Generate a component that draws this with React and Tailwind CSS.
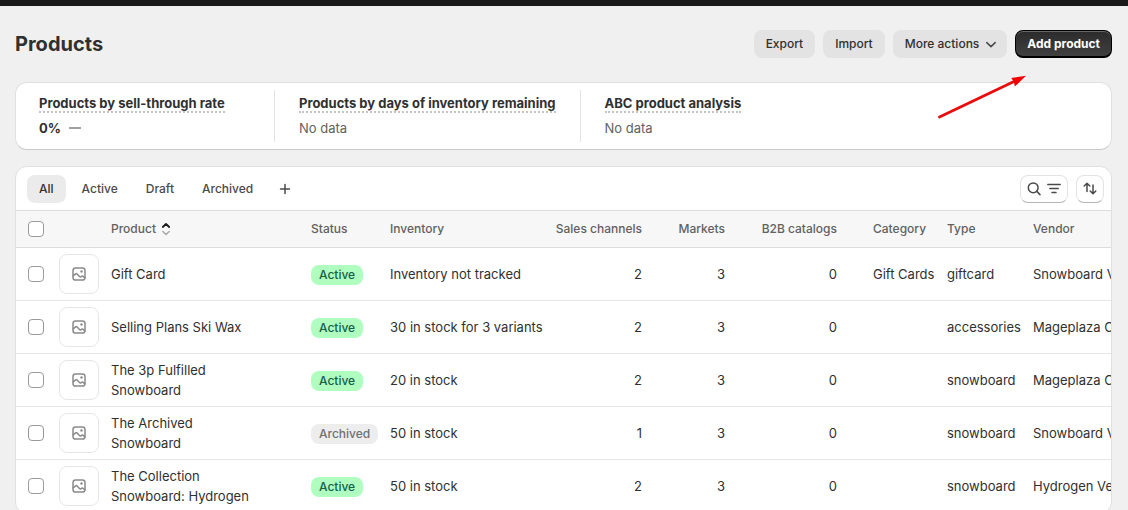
import { useState } from 'react';
import clsx from 'clsx';

const metrics = [
  { title: 'Products by sell-through rate', value: '0%' },
  { title: 'Products by days of inventory remaining' },
  { title: 'ABC product analysis' }
];

const tabs = ['All', 'Active', 'Draft', 'Archived'];

const products = [
  { name: 'Gift Card', status: 'Active', inventory: 'Inventory not tracked', channels: 2, markets: 3, catalogs: 0, category: 'Gift Cards', type: 'giftcard', vendor: 'Snowboard Vendor' },
  { name: 'Selling Plans Ski Wax', status: 'Active', inventory: '30 in stock for 3 variants', channels: 2, markets: 3, catalogs: 0, category: '', type: 'accessories', vendor: 'Mageplaza Com' },
  { name: 'The 3p Fulfilled Snowboard', status: 'Active', inventory: '20 in stock', channels: 2, markets: 3, catalogs: 0, category: '', type: 'snowboard', vendor: 'Mageplaza Com' },
  { name: 'The Archived Snowboard', status: 'Archived', inventory: '50 in stock', channels: 1, markets: 3, catalogs: 0, category: '', type: 'snowboard', vendor: 'Snowboard Vendor' },
  { name: 'The Collection Snowboard: Hydrogen', status: 'Active', inventory: '50 in stock', channels: 2, markets: 3, catalogs: 0, category: '', type: 'snowboard', vendor: 'Hydrogen Vendor' }
];

const secondaryButton = 'flex h-7 items-center rounded-lg bg-[#e3e3e3] px-3 text-[#303030] hover:bg-[#d8d8d8]';
const iconButton = 'flex h-7 items-center justify-center rounded-lg border border-[#e3e3e3] border-b-[#b5b5b5] bg-white text-[#4a4a4a]';

function Icon({ className, children }) {
  return (
    <svg viewBox="0 0 20 20" fill="none" stroke="currentColor" strokeWidth="1.5" strokeLinecap="round" strokeLinejoin="round" className={clsx('h-5 w-5 shrink-0', className)} aria-hidden="true">
      {children}
    </svg>
  );
}

function Checkbox({ label, checked, onChange }) {
  return (
    <input
      type="checkbox"
      aria-label={label}
      checked={checked}
      onChange={onChange}
      className="block h-4 w-4 appearance-none rounded border border-[#9a9a9a] bg-white checked:bg-[#303030]"
    />
  );
}

function Badge({ status }) {
  return (
    <span className={clsx('block h-5 w-fit rounded-lg px-2 text-xs font-[550] leading-5', status === 'Active' ? 'bg-[#affebf] text-[#14604a]' : 'bg-[#ededed] text-[#707070]')}>
      {status}
    </span>
  );
}

function PageHeader() {
  return (
    <header className="flex items-center justify-between">
      <h1 className="text-xl font-[650] leading-7">Products</h1>
      <div className="flex items-center gap-2 text-xs font-[550]">
        <button type="button" className={secondaryButton}>Export</button>
        <button type="button" className={secondaryButton}>Import</button>
        <button type="button" className={clsx(secondaryButton, 'gap-1')}>
          More actions
          <svg viewBox="0 0 16 16" fill="none" stroke="#4a4a4a" strokeWidth="1.5" strokeLinecap="round" strokeLinejoin="round" className="-mr-1 h-4 w-4" aria-hidden="true">
            <path d="M3.800 6.600 8 10.600l4.200-4" />
          </svg>
        </button>
        <div className="relative">
          <button type="button" className="h-7 rounded-lg border border-black border-b-2 bg-gradient-to-b from-[#2b2b2b] to-[#404040] px-[11px] font-[650] text-white shadow-[inset_0_1px_0_#666]">
            Add product
          </button>
          <svg viewBox="0 0 88 44" className="pointer-events-none absolute right-[86px] top-[45px] z-10 h-11 w-[88px]" aria-hidden="true">
            <path d="M1.500 42 76 6.500" stroke="#e80c0c" strokeWidth="2.800" strokeLinecap="round" />
            <path d="M88 0.800 73.200 3 75.800 6.600 76.800 11.600Z" fill="#f50000" />
          </svg>
        </div>
      </div>
    </header>
  );
}

function Metrics() {
  return (
    <section className="mt-6 flex rounded-xl border border-[#e0e0e0] border-b-[#c9c9c9] bg-white py-[7px]">
      {metrics.map(metric => (
        <div key={metric.title} className="min-w-[259px] border-r border-[#e3e3e3] px-6 pb-1 pt-[3px] last:border-r-0 first:pl-[23px]">
          <h2 className="relative w-fit font-[650] leading-5">
            {metric.title}
            <span className="absolute inset-x-0 bottom-0 border-b-2 border-dotted border-[#c4c4c4]" />
          </h2>
          <p className="mt-[5px] flex h-5 items-center leading-5">
            {metric.value ? (
              <>
                <span className="font-[650]">{metric.value}</span>
                <span className="ml-2 h-[2px] w-3 bg-[#a0a0a0]" />
              </>
            ) : (
              <span className="text-[#616161]">No data</span>
            )}
          </p>
        </div>
      ))}
    </section>
  );
}

function Toolbar({ active, onSelect }) {
  return (
    <div className="flex items-center justify-between border-b border-[#dcdcdc] pb-[7px] pl-[11px] pr-[7px] pt-2">
      <div className="flex items-center gap-1 text-xs font-[550] text-[#4a4a4a]">
        {tabs.map(tab => (
          <button
            key={tab}
            type="button"
            onClick={() => onSelect(tab)}
            className={clsx('h-7 rounded-lg px-3', tab === active ? 'bg-[#ebebeb] text-[#303030]' : 'hover:bg-[#f5f5f5]')}
          >
            {tab}
          </button>
        ))}
        <button type="button" aria-label="Create new view" className="flex h-7 w-9 items-center justify-center">
          <Icon className="-ml-1"><path d="M10 5.500v9M5.500 10h9" /></Icon>
        </button>
      </div>
      <div className="flex items-center gap-2">
        <button type="button" aria-label="Search and filter" className={clsx(iconButton, 'w-12')}>
          <Icon>
            <circle cx="9.200" cy="8.800" r="4.900" />
            <path d="m12.800 12.400 3.200 3.200" />
          </Icon>
          <Icon><path d="M3.800 5.500h12.400M5.800 9.500h8.400M8 13.500h4" /></Icon>
        </button>
        <button type="button" aria-label="Sort" className={clsx(iconButton, 'w-7')}>
          <Icon>
            <path d="M7 12.500V4.300M4.200 7 7 4.200l2.800 2.800M13 6v8.700M10.200 12l2.800 2.800 2.800-2.800" />
          </Icon>
        </button>
      </div>
    </div>
  );
}

function ProductTable() {
  const [selected, setSelected] = useState([]);

  const toggle = (name) => {
    setSelected(selected.includes(name) ? selected.filter(n => n !== name) : [...selected, name]);
  };

  const toggleAll = () => {
    setSelected(selected.length === products.length ? [] : products.map(p => p.name));
  };

  return (
    <table className="w-full min-w-[1184px] table-fixed border-collapse text-left">
      <colgroup>
        <col className="w-[37px]" />
        <col className="w-[52px]" />
        <col className="w-[200px]" />
        <col className="w-[79px]" />
        <col className="w-[160px]" />
        <col className="w-[104px]" />
        <col className="w-[83px]" />
        <col className="w-[112px]" />
        <col className="w-[98px]" />
        <col className="w-[86px]" />
        <col />
      </colgroup>
      <thead>
        <tr className="h-[37px] bg-[#f7f7f7] text-xs text-[#616161] shadow-[inset_0_-1px_0_#dcdcdc] *:px-1.5 *:pb-0.5 *:font-[550]">
          <td className="pl-3!">
            <Checkbox label="Select all products" checked={selected.length === products.length} onChange={toggleAll} />
          </td>
          <td />
          <th scope="col">
            <button type="button" className="flex items-center gap-1">
              Product
              <svg viewBox="0 0 10 14" fill="none" strokeWidth="1.800" strokeLinecap="round" strokeLinejoin="round" className="ml-px h-3.5 w-2.5" aria-hidden="true">
                <path d="M1.800 5 5 2l3.200 3" stroke="#1a1a1a" />
                <path d="M1.800 9.500 5 12.500l3.200-3" stroke="#a8a8a8" strokeWidth="1.500" />
              </svg>
            </button>
          </th>
          <th scope="col">Status</th>
          <th scope="col">Inventory</th>
          <th scope="col" className="text-right">Sales channels</th>
          <th scope="col" className="text-right">Markets</th>
          <th scope="col" className="text-right">B2B catalogs</th>
          <th scope="col" className="pl-[30px]!">Category</th>
          <th scope="col">Type</th>
          <th scope="col">Vendor</th>
        </tr>
      </thead>
      <tbody>
        {products.map(product => (
          <tr key={product.name} className="h-[53px] shadow-[inset_0_-1px_0_#e6e6e6] *:whitespace-nowrap *:px-1.5 *:pb-0.5 *:leading-5">
            <td className="pl-3!">
              <Checkbox label={`Select ${product.name}`} checked={selected.includes(product.name)} onChange={() => toggle(product.name)} />
            </td>
            <td>
              <div className="flex h-10 w-10 items-center justify-center rounded-lg border border-[#e6e6e6] text-[#8a8a8a]">
                <Icon>
                  <rect x="4" y="4" width="12" height="12" rx="2.600" />
                  <path d="M4.200 11.800 6.600 9.900q.8-.6 1.500.1l2.600 2.700q.6.500 1.300.1l.8-.6q.7-.4 1.300.1l1.800 1.500" />
                  <circle cx="12.500" cy="7.500" r="1.200" fill="currentColor" stroke="none" />
                </Icon>
              </div>
            </td>
            <td className="pr-12! whitespace-normal!">{product.name}</td>
            <td className="pb-0!"><Badge status={product.status} /></td>
            <td>{product.inventory}</td>
            <td className="text-right">{product.channels}</td>
            <td className="text-right">{product.markets}</td>
            <td className="text-right">{product.catalogs}</td>
            <td className="pl-[30px]!">{product.category}</td>
            <td>{product.type}</td>
            <td>{product.vendor}</td>
          </tr>
        ))}
      </tbody>
    </table>
  );
}

export default function App() {
  const [activeTab, setActiveTab] = useState('All');

  return (
    <div className="h-screen overflow-hidden border-t-[6px] border-[#1a1a1a] bg-[#f0f0f0] font-[Inter,sans-serif] text-[13px] text-[#303030]">
      <main className="pl-[15px] pr-4 pt-6">
        <PageHeader />
        <Metrics />
        <section className="mt-4 overflow-hidden rounded-xl border border-[#e0e0e0] bg-white">
          <Toolbar active={activeTab} onSelect={setActiveTab} />
          <ProductTable />
        </section>
      </main>
    </div>
  );
}
